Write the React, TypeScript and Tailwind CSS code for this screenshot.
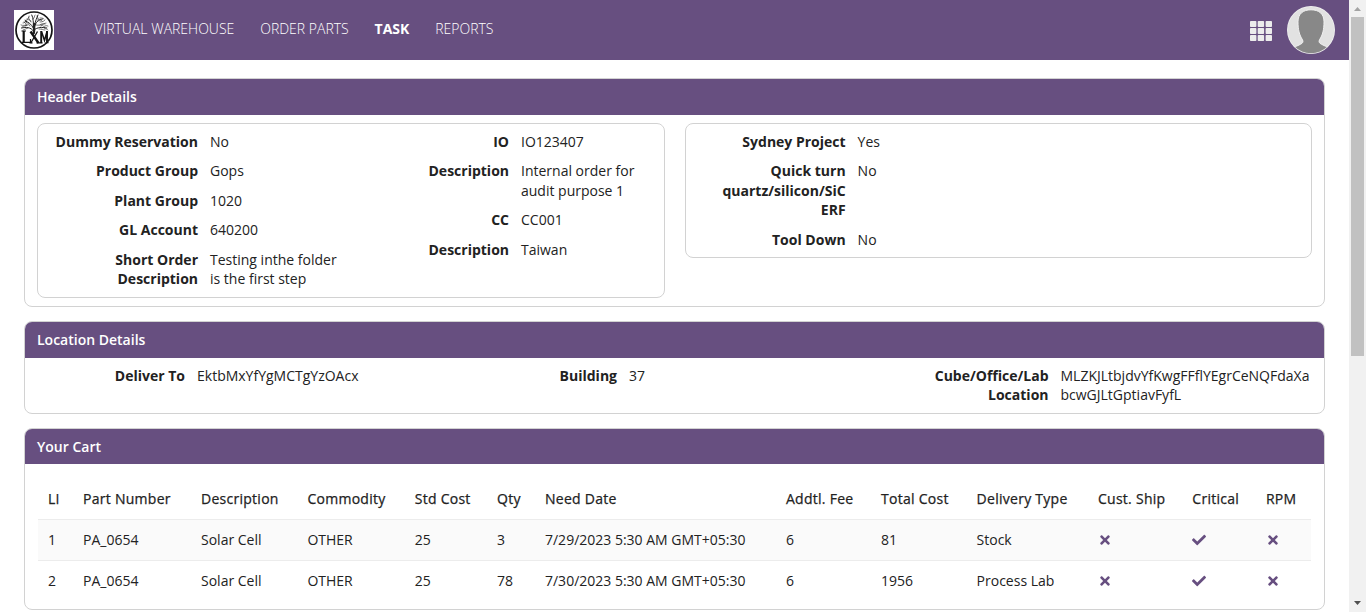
import React from "react";
import { FaTimes, FaCheck } from "react-icons/fa";

type Field = { label: string; value: string };

const orderFields: Field[] = [
  { label: "Dummy Reservation", value: "No" },
  { label: "Product Group", value: "Gops" },
  { label: "Plant Group", value: "1020" },
  { label: "GL Account", value: "640200" },
  { label: "Short Order Description", value: "Testing inthe folder is the first step" },
];

const costFields: Field[] = [
  { label: "IO", value: "IO123407" },
  { label: "Description", value: "Internal order for audit purpose 1" },
  { label: "CC", value: "CC001" },
  { label: "Description", value: "Taiwan" },
];

const projectFields: Field[] = [
  { label: "Sydney Project", value: "Yes" },
  { label: "Quick turn quartz/silicon/SiC ERF", value: "No" },
  { label: "Tool Down", value: "No" },
];

const cartRows = [
  ["1", "PA_0654", "Solar Cell", "OTHER", "25", "3", "7/29/2023 5:30 AM GMT+05:30", "6", "81", "Stock"],
  ["2", "PA_0654", "Solar Cell", "OTHER", "25", "78", "7/30/2023 5:30 AM GMT+05:30", "6", "1956", "Process Lab"],
];

const columns = [
  { title: "LI", width: "w-[35px]" },
  { title: "Part Number", width: "w-[118px]" },
  { title: "Description", width: "w-[106.400px]" },
  { title: "Commodity", width: "w-[107.300px]" },
  { title: "Std Cost", width: "w-[82.300px]" },
  { title: "Qty", width: "w-[48px]" },
  { title: "Need Date", width: "w-[241px]" },
  { title: "Addtl. Fee", width: "w-[95px]" },
  { title: "Total Cost", width: "w-[95.600px]" },
  { title: "Delivery Type", width: "w-[121.400px]" },
  { title: "Cust. Ship", width: "w-[94.400px]" },
  { title: "Critical", width: "w-[73.600px]" },
  { title: "RPM", width: "w-[55px]" },
];

function Logo() {
  return (
    <svg viewBox="0 0 40 40" className="block size-10 bg-white">
      <circle cx="20" cy="20" r="18" fill="none" stroke="#151515" strokeWidth="1.7" />
      <g fill="none" stroke="#222" strokeLinecap="round">
        <path d="M19.800 23c.6-3 .3-6 .2-9" strokeWidth="2.400" />
        <path d="M19.500 21c-3-4-7-4-12-3M19.800 20c4-3 8-3 13-2M19.300 18c-2-4-5-6-8-7M20.500 17c1-5 4-7 8-8M19.800 16c-1-4 0-7-2-11M21 15c0-4 2-7 3-10" strokeWidth="1" />
        <path d="M14 15c-3 0-5 1-7 0M12 13c0-3 2-4 3-6M17 11c-2-1-3-3-2-5M23 12c2-2 1-4 0-6M26 12c3 0 4-1 5-2M28 18c2-2 4-3 6-2M30 18c2 1 3 1 4 2M25 19c3 0 4 1 6 1M14 18c-2 1-3 1-5 2M22 15c3 1 5-1 7 0M16 16c-1-3-4-3-5-6M9 13c2 0 2-1 3-3M19 9c2-1 1-3 2-4M26 8c2 0 3 0 4 1M31 14c-2-1-4 0-5 1M8 17c2-1 4-1 5-2M13 9c2 1 3 1 4 3M24 9c1 1 3 0 4 2M27 16c2-1 3-3 5-3M12 16c1-2-1-3-2-4" strokeWidth=".6" />
      </g>
      <g fill="none" stroke="#111">
        <path d="M9.700 21v11.400" strokeWidth="2.200" />
        <path d="M7.500 21h4.500M7.500 32.300h9v-3.300" strokeWidth="1.200" />
        <path d="M16.500 21.500l8 11.500" strokeWidth="2.300" />
        <path d="M23.500 21.500L16.800 33" strokeWidth="1.300" />
        <path d="M27.200 33V21M33 21v12" strokeWidth="1.900" />
        <path d="M27.500 21.500l3 9 2.500-9" strokeWidth="1.500" />
        <path d="M15.500 32.800h3M22.500 32.800h6M31.500 32.600h3" strokeWidth="1.200" />
      </g>
    </svg>
  );
}

function AppsIcon() {
  return (
    <svg viewBox="0 0 22 20" className="relative top-px h-5 w-[22px] fill-[#ececec]">
      {[0, 7, 14].map((y) =>
        [0, 7.700, 15.600].map((x) => (
          <rect key={`${x}-${y}`} x={x} y={y} width="6.400" height="6" rx="0.8" />
        ))
      )}
    </svg>
  );
}

function Avatar() {
  return (
    <svg viewBox="0 0 48 48" className="block size-12">
      <defs>
        <clipPath id="avatar-clip">
          <circle cx="24" cy="24" r="23.200" />
        </clipPath>
      </defs>
      <circle cx="24" cy="24" r="24" fill="#f0f0f0" />
      <g clipPath="url(#avatar-clip)">
        <rect width="48" height="48" fill="#e2e2e2" />
        <path
          d="M24 3.800c-8 0-13 4-13 12 0 8 1.300 13 4.500 18 1 2 .3 3.200-2 4.500-2.500 1.300-5 2.200-7 3.500v7h35v-7c-2-1.300-4.500-2.200-7-3.500-2.300-1.300-3-2.500-2-4.500 3.200-5 4.500-10 4.500-18 0-8-5-12-13-12Z"
          fill="#888888"
          stroke="#f0f0f0"
          strokeWidth="1"
        />
      </g>
    </svg>
  );
}

function Card({ title, height, bar, children }: { title: string; height: string; bar: string; children: React.ReactNode }) {
  return (
    <section className={`overflow-hidden rounded-lg border border-[#d2d2d2] bg-white ${height}`}>
      <h2 className={`flex items-center bg-[#674f80] px-3 font-semibold text-white ${bar}`}>{title}</h2>
      {children}
    </section>
  );
}

function FieldRow({ label, value, labelWidth, valueWidth }: Field & { labelWidth: string; valueWidth: string }) {
  return (
    <div className="flex gap-3">
      <dt className={`shrink-0 text-right font-bold ${labelWidth}`}>{label}</dt>
      <dd className={`shrink-0 ${valueWidth}`}>{value}</dd>
    </div>
  );
}

function FieldList({ fields, labelWidth, valueWidth }: { fields: Field[]; labelWidth: string; valueWidth: string }) {
  return (
    <dl className="flex flex-col gap-[9.800px]">
      {fields.map((field, i) => (
        <FieldRow key={i} {...field} labelWidth={labelWidth} valueWidth={valueWidth} />
      ))}
    </dl>
  );
}

export default function App() {
  return (
    <div className="flex h-[612px] w-[1366px] overflow-hidden bg-white font-['Open_Sans',sans-serif] text-[14px] leading-[19.6px] text-[#222]">
      <div className="flex w-[1349px] flex-col">
        <header className="flex h-[60px] shrink-0 items-center bg-[#674f80] pr-[14px] pl-[14px]">
          <Logo />
          <nav className="ml-[40.600px] flex gap-[25.900px] pb-[2px] font-light text-white">
            <a>VIRTUAL WAREHOUSE</a>
            <a>ORDER PARTS</a>
            <a className="font-bold">TASK</a>
            <a>REPORTS</a>
          </nav>
          <div className="ml-auto flex items-center gap-[15px]">
            <AppsIcon />
            <Avatar />
          </div>
        </header>

        <main className="flex flex-col gap-[14px] px-6 pt-[18px]">
          <Card title="Header Details" height="h-[229px]" bar="h-9">
            <div className="flex items-start gap-5 px-3 pt-2">
              <div className="flex h-[175px] w-[628px] rounded-lg border border-[#d2d2d2] pt-[8px]">
                <FieldList fields={orderFields} labelWidth="w-[160px]" valueWidth="w-[138px]" />
                <FieldList fields={costFields} labelWidth="w-[161px]" valueWidth="w-[130px]" />
              </div>
              <div className="h-[135px] w-[627px] rounded-lg border border-[#d2d2d2] pt-[7.700px] pl-[9.600px]">
                <FieldList fields={projectFields} labelWidth="w-[150px]" valueWidth="w-[138px]" />
              </div>
            </div>
          </Card>

          <Card title="Location Details" height="h-[93px]" bar="h-9">
            <dl className="flex pt-[7.700px]">
              <FieldRow label="Deliver To" value="EktbMxYfYgMCTgYzOAcx" labelWidth="w-[160px]" valueWidth="w-[260px]" />
              <FieldRow label="Building" value="37" labelWidth="w-[160px]" valueWidth="w-[260px]" />
              <FieldRow
                label="Cube/Office/Lab Location"
                value="MLZKJLtbjdvYfKwgFFflYEgrCeNQFdaXabcwGJLtGptiavFyfL"
                labelWidth="w-[159.500px]"
                valueWidth="w-[252px] break-all"
              />
            </dl>
          </Card>

          <Card title="Your Cart" height="h-[182px]" bar="h-[35px]">
            <div className="px-[13px] pt-[14px]">
              <table className="w-[1273px] table-fixed border-collapse text-left">
                <thead>
                  <tr className="h-[41px]">
                    {columns.map((column) => (
                      <th
                        key={column.title}
                        className={`pt-[2px] pl-[10px] font-medium tracking-[0.27px] whitespace-nowrap [-webkit-text-stroke:0.25px_#222] ${column.width}`}
                      >
                        {column.title}
                      </th>
                    ))}
                  </tr>
                </thead>
                <tbody>
                  {cartRows.map((row) => (
                    <tr key={row[0]} className="h-[41px] border-t border-[#ececec] odd:bg-[#fafafa]">
                      {row.map((cell, i) => (
                        <td key={i} className="pl-[10px] whitespace-nowrap">{cell}</td>
                      ))}
                      <td className="pl-[10px]"><FaTimes className="size-[14px] text-[#674f80]" /></td>
                      <td className="pl-[10px]"><FaCheck className="size-[14px] text-[#674f80]" /></td>
                      <td className="pl-[10px]"><FaTimes className="size-[14px] text-[#674f80]" /></td>
                    </tr>
                  ))}
                </tbody>
              </table>
            </div>
          </Card>
        </main>
      </div>

      <div className="flex w-[17px] flex-col items-center bg-[#f1f1f1]">
        <svg viewBox="0 0 17 17" className="size-[17px] shrink-0"><path d="M5 11h7L8.500 7z" fill="#a3a3a3" /></svg>
        <div className="h-[339px] w-[13px] bg-[#c1c1c1]" />
        <svg viewBox="0 0 17 17" className="mt-auto size-[17px] shrink-0"><path d="M5 6h7l-3.500 4z" fill="#505050" /></svg>
      </div>
    </div>
  );
}
